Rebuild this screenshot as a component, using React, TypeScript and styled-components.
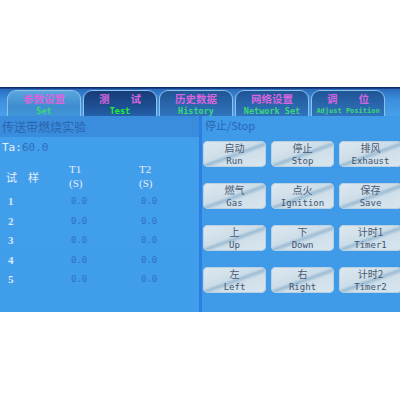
import styled, {createGlobalStyle} from 'styled-components'

const tabs = [
    {cn: '参数设置', en: 'Set', tone: 'light'},
    {cn: '测　　试', en: 'Test', tone: 'dark'},
    {cn: '历史数据', en: 'History', tone: 'mid'},
    {cn: '网络设置', en: 'Network Set', tone: 'mid'},
    {cn: '调　　位', en: 'Adjust Position', tone: 'mid', small: true},
]

const buttons = [
    ['启动', 'Run'],
    ['停止', 'Stop'],
    ['排风', 'Exhaust'],
    ['燃气', 'Gas'],
    ['点火', 'Ignition'],
    ['保存', 'Save'],
    ['上', 'Up'],
    ['下', 'Down'],
    ['计时1', 'Timer1'],
    ['左', 'Left'],
    ['右', 'Right'],
    ['计时2', 'Timer2'],
]

const samples = [1, 2, 3, 4, 5]

export default function App() {
    return (
        <>
            <GlobalStyle />
            <Screen>
                <TopEdge />
                <TabBar>
                    {tabs.map((tab) => (
                        <Tab key={tab.en} tone={tab.tone}>
                            <TabCn>{tab.cn}</TabCn>
                            <TabEn bright={tab.en === 'Test'} small={tab.small}>
                                {tab.en}
                            </TabEn>
                        </Tab>
                    ))}
                </TabBar>
                <Content>
                    <LeftPanel>
                        <PanelTitle>传送带燃烧实验</PanelTitle>
                        <TaLine>
                            Ta:<TaValue>60.0</TaValue>
                        </TaLine>
                        <Table>
                            <HeadLabel>试　样</HeadLabel>
                            <HeadCol>
                                T1
                                <br />
                                (S)
                            </HeadCol>
                            <HeadCol>
                                T2
                                <br />
                                (S)
                            </HeadCol>
                            {samples.map((n) => (
                                <Row key={n}>
                                    <RowNo>{n}</RowNo>
                                    <Cell>0.0</Cell>
                                    <Cell>0.0</Cell>
                                </Row>
                            ))}
                        </Table>
                    </LeftPanel>
                    <Divider />
                    <RightPanel>
                        <StateTitle>停止/Stop</StateTitle>
                        <ButtonGrid>
                            {buttons.map(([cn, en]) => (
                                <KeyButton key={en}>
                                    <KeyCn>{cn}</KeyCn>
                                    <KeyEn>{en}</KeyEn>
                                </KeyButton>
                            ))}
                        </ButtonGrid>
                    </RightPanel>
                </Content>
            </Screen>
        </>
    )
}

const GlobalStyle = createGlobalStyle`
    html, body {
        margin: 0;
        padding: 0;
        background: #ffffff;
    }
    body {
        font-family: "Liberation Serif", "Noto Sans CJK SC", serif;
    }
`

const Screen = styled.div`
    margin-top: 87px;
    width: 400px;
    height: 225px;
    display: flex;
    flex-direction: column;
    overflow: hidden;
    background: #3d9ae8;
`

const TopEdge = styled.div`
    height: 2px;
    background: linear-gradient(#0b2156, #1e4c98);
`

const TabBar = styled.div`
    height: 27px;
    display: flex;
    align-items: flex-end;
    gap: 2px;
    padding-left: 7px;
    background: linear-gradient(#2a6cc0 0%, #3c8fde 40%, #48a0ea 100%);
`

const tabBg = {
    light: 'linear-gradient(#5aa6dc, #3e8ed0 60%, #4096d8)',
    dark: 'linear-gradient(#173c78, #1d4f92 60%, #2460a8)',
    mid: 'linear-gradient(#1f5596, #2a68ae 60%, #2f74bc)',
}

const Tab = styled.div<{tone: string}>`
    width: 74px;
    height: 26px;
    box-sizing: border-box;
    border: 1px solid #8fc0e8;
    border-bottom: none;
    border-radius: 9px 9px 0 0;
    background: ${(p) => tabBg[p.tone]};
    display: flex;
    flex-direction: column;
    align-items: center;
    justify-content: flex-start;
    overflow: hidden;
`

const TabCn = styled.div`
    height: 15px;
    font-family: "Noto Sans CJK SC", sans-serif;
    font-size: 10.5px;
    line-height: 15px;
    font-weight: 700;
    color: #d964de;
    white-space: pre;
`

const TabEn = styled.div<{bright?: boolean; small?: boolean}>`
    height: 10px;
    font-family: "DejaVu Sans Mono", monospace;
    font-size: ${(p) => (p.small ? '7px' : '8.5px')};
    line-height: 10px;
    font-weight: 700;
    color: ${(p) => (p.bright ? '#22f030' : '#3ad878')};
    white-space: nowrap;
`

const Content = styled.div`
    flex: 1;
    display: flex;
    background: #3f9cea;
`

const LeftPanel = styled.div`
    width: 199px;
    display: flex;
    flex-direction: column;
    background: linear-gradient(180deg, #429fec, #3f9de9);
`

const PanelTitle = styled.div`
    height: 21px;
    line-height: 21px;
    padding-left: 2px;
    font-family: "Noto Sans CJK SC", sans-serif;
    font-size: 12px;
    color: #2a63ae;
    background: #3a8ddc;
`

const TaLine = styled.div`
    margin-top: 3px;
    padding-left: 2px;
    font-family: "DejaVu Sans Mono", monospace;
    font-size: 11px;
    line-height: 16px;
    color: #e6eefa;
`

const TaValue = styled.span`
    color: #2e6dbe;
`

const Table = styled.div`
    margin-top: 6px;
    display: grid;
    grid-template-columns: 66px 70px 63px;
    grid-auto-rows: auto;
`

const HeadLabel = styled.div`
    padding-left: 6px;
    align-self: center;
    font-family: "Noto Sans CJK SC", sans-serif;
    font-size: 11px;
    color: #e6eefa;
`

const HeadCol = styled.div`
    padding-left: 3px;
    height: 30px;
    font-family: "Liberation Serif", serif;
    font-size: 11px;
    line-height: 14px;
    color: #e6eefa;
`

const Row = styled.div`
    display: contents;
`

const RowNo = styled.div`
    padding-left: 8px;
    height: 19.5px;
    line-height: 19.5px;
    font-family: "Liberation Serif", serif;
    font-weight: 700;
    font-size: 11px;
    color: #dbe8fb;
`

const Cell = styled.div`
    padding-left: 5px;
    line-height: 19.5px;
    font-family: "DejaVu Sans Mono", monospace;
    font-size: 9px;
    color: #2f72c6;
`

const Divider = styled.div`
    width: 3px;
    background: #2b7ee2;
`

const RightPanel = styled.div`
    flex: 1;
    display: flex;
    flex-direction: column;
    padding-left: 1px;
    overflow: hidden;
    background: #3f9ae8;
`

const StateTitle = styled.div`
    height: 21px;
    line-height: 18px;
    padding-left: 2px;
    font-family: "Noto Sans CJK SC", sans-serif;
    font-size: 11px;
    color: #2a66b6;
`

const ButtonGrid = styled.div`
    margin-top: 4px;
    display: grid;
    grid-template-columns: repeat(3, 63px);
    column-gap: 5px;
    row-gap: 16px;
`

const KeyButton = styled.div`
    height: 26px;
    border-radius: 5px;
    display: flex;
    flex-direction: column;
    align-items: center;
    justify-content: center;
    background: linear-gradient(160deg, #dfe9f0 0%, #ccdde8 45%, #9ebdd4 52%, #cfdfe9 60%, #d9e6ee 100%);
    box-shadow: inset 0 0 0 1px #b8d0e2;
`

const KeyCn = styled.div`
    height: 14.5px;
    font-family: "Noto Sans CJK SC", sans-serif;
    font-size: 10px;
    line-height: 14.5px;
    color: #4a5a72;
`

const KeyEn = styled.div`
    height: 11px;
    font-family: "DejaVu Sans Mono", monospace;
    font-size: 9px;
    line-height: 11px;
    color: #3f5370;
`
